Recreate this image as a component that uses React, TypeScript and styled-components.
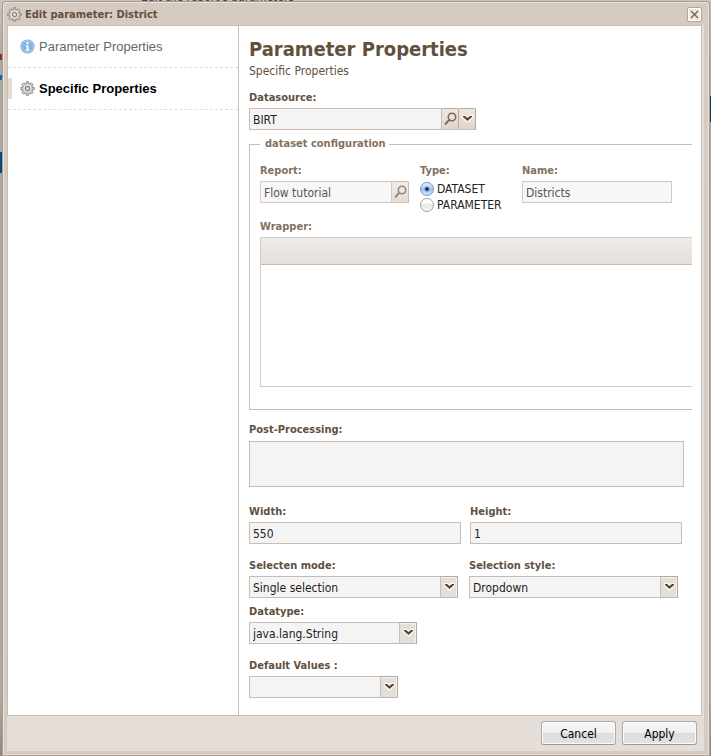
import React, { useId, useState } from "react";
import styled, { createGlobalStyle, css } from "styled-components";

const ui = `"DejaVu Sans Condensed", "Liberation Sans", sans-serif`;
const line = "#cabcb0";
const brown = "#62503f";
const mutedBrown = "#84715f";

const GlobalStyle = createGlobalStyle`
  * { box-sizing: border-box; }
  body { margin: 0; font: 12px/16px ${ui}; color: #222; }
  button, input, select, textarea { font: inherit; color: inherit; margin: 0; border-radius: 0; }
`;

const Page = styled.div`
  position: relative;
  display: flex;
  min-height: 100vh;
  padding: 1px 1px 0 2px;
  overflow: hidden;
  background:
    linear-gradient(#7c3526, #7c3526) 0 54px / 2px 6px no-repeat,
    linear-gradient(#12649c, #12649c) 0 75px / 2px 5px no-repeat,
    linear-gradient(#064a80, #064a80) 0 152px / 2px 21px no-repeat,
    linear-gradient(#063a62, #063a62) 100% 96px / 1px 26px no-repeat,
    linear-gradient(#c4c6c4, #a5a8a8 60px, #a9aaaa 700px, #94857b);
`;

const BackdropText = styled.p`
  position: absolute;
  top: -11px;
  left: 141px;
  margin: 0;
  color: #3c4254;
`;

const Dialog = styled.section`
  position: relative;
  display: flex;
  flex-direction: column;
  flex: 1;
  min-width: 0;
  padding: 0 4px 4px;
  border: 1px solid #ab9b8d;
  border-radius: 3px 3px 0 0;
  box-shadow: inset 0 0 0 1px #ebe1d8;
  background: #d6cbc1;
`;

const TitleBar = styled.header`
  display: flex;
  align-items: center;
  gap: 3px;
  height: 23px;
  padding-top: 1px;
`;

const Title = styled.h1`
  flex: 1;
  margin: 0;
  padding-top: 2px;
  font-size: 11px;
  line-height: 16px;
  color: ${brown};
`;

const CloseButton = styled.button`
  display: flex;
  align-items: center;
  justify-content: center;
  width: 15px;
  height: 15px;
  margin-right: 3px;
  padding: 0;
  border: 1px solid #b6a797;
  border-radius: 2px;
  background: #eee8e2;
  box-shadow: inset 0 0 0 1px #fff;
`;

const Frame = styled.div`
  display: flex;
  flex-direction: column;
  flex: 1;
  margin-right: 1px;
  background: #e5ddd7;
`;

const Body = styled.div`
  display: flex;
  flex: 1;
  margin-right: 2px;
  border: 1px solid ${line};
  background: #fff;
`;

const Sidebar = styled.nav`
  flex: 0 0 231px;
  border-right: 1px solid ${line};
`;

const SideLink = styled.a<{ $active?: boolean }>`
  display: flex;
  align-items: center;
  gap: 4px;
  height: 42px;
  border-bottom: 1px dashed #dedede;
  font: ${p => (p.$active ? "bold" : "normal")} 13px/16px "Liberation Sans", Arial, sans-serif;
  color: ${p => (p.$active ? "#000" : "#666")};
  text-decoration: none;

  &::before {
    content: "";
    width: 4px;
    height: 21px;
    margin-right: 4px;
    background: ${p => (p.$active ? "#e5ddd7" : "transparent")};
  }
`;

const Form = styled.form`
  flex: 1;
  min-width: 0;
  padding: 11px 9px 16px 10px;
`;

const Heading = styled.h2`
  margin: 0;
  font-size: 20px;
  line-height: 24px;
  color: ${brown};
`;

const SubHeading = styled.p`
  margin: 2px 0 10px;
  color: ${brown};
`;

const Field = styled.div<{ $width?: number }>`
  display: flex;
  flex-direction: column;
  gap: 1px;
  min-width: 0;
  max-width: ${p => (p.$width ? `${p.$width}px` : "none")};
`;

const labelText = css`
  font-size: 11px;
  font-weight: bold;
  line-height: 18px;
  color: ${brown};
`;

const Label = styled.label`
  ${labelText}
`;

const fieldBox = css`
  width: 100%;
  min-width: 0;
  padding: 1px 3px 0;
  border: 1px solid ${line};
  background: #f4f4f4;
  outline: none;
`;

const TextInput = styled.input`
  ${fieldBox}
  height: 22px;
`;

const TextArea = styled.textarea`
  ${fieldBox}
  display: block;
  height: 46px;
  resize: none;
`;

const Joined = styled.div`
  display: flex;
  ${TextInput} { flex: 1; }
`;

const SquareButton = styled.button`
  display: flex;
  flex: 0 0 17px;
  align-items: center;
  justify-content: center;
  height: 22px;
  padding: 0;
  border: 1px solid #b9a99b;
  border-left-color: #e6ddd5;
  border-bottom-color: ${line};
  border-top-right-radius: 2px;
  background: linear-gradient(#eee8e2, #ded5cd);
`;

const SelectWrap = styled.div`
  position: relative;
`;

const Select = styled.select`
  ${fieldBox}
  display: block;
  height: 22px;
  padding-right: 20px;
  appearance: none;
`;

const SelectArrow = styled.span`
  position: absolute;
  inset: 0 0 0 auto;
  display: flex;
  align-items: center;
  justify-content: center;
  width: 18px;
  padding-bottom: 1px;
  border: 1px solid #b9a99b;
  border-left-color: ${line};
  border-bottom-color: #bcb6bb;
  border-top-right-radius: 2px;
  background: #e5dfd9;
  box-shadow: inset -1px 1px 0 #f5f1ed;
  pointer-events: none;
`;

const Dataset = styled.fieldset`
  min-width: 0;
  margin: 5px 0 11px;
  padding: 9px 0 22px 10px;
  border: 1px solid ${line};
  border-right: 0;
`;

const Legend = styled.legend`
  ${labelText}
  padding: 0 3px 0 5px;
  color: ${mutedBrown};
`;

const DatasetRow = styled.div`
  display: grid;
  grid-template-columns: 149px 91px 150px;
  column-gap: 11px;
  margin-bottom: 5px;
  ${Label} { color: ${mutedBrown}; }
  ${TextInput} { background: #f7f7f7; border-color: #d6cabf; color: #555; }
  ${SquareButton} { opacity: 0.8; }
`;

const Choices = styled.div`
  min-width: 0;
`;

const GroupLabel = styled.div`
  ${labelText}
  margin-bottom: 1px;
  color: ${mutedBrown};
`;

const RadioLabel = styled.label`
  display: flex;
  align-items: center;
  gap: 3px;
  height: 16px;
`;

const Radio = styled.input`
  flex: none;
  appearance: none;
  width: 14px;
  height: 14px;
  border: 1px solid #a3a3a3;
  border-radius: 50%;
  background: linear-gradient(#fff 30%, #e8e8e8 50%, #fafafa);

  &:checked {
    border-color: #7394bd;
    background:
      radial-gradient(circle, #18304f 0 1px, transparent 3px),
      linear-gradient(#e9f3fd, #9cc5f3 55%, #c8ecff);
  }
`;

const WrapperTable = styled.table`
  width: 100%;
  border-collapse: separate;
  border-spacing: 0;
  border: 1px solid #d6cabf;
  border-right: 0;

  th { height: 27px; padding: 0; border-bottom: 1px solid ${line}; background: linear-gradient(#eeebe8, #e4dfda); }
  td { height: 121px; padding: 0; }
`;

const FieldPair = styled.div<{ $gap: number; $inset: number }>`
  display: grid;
  grid-template-columns: 1fr 1fr;
  column-gap: ${p => p.$gap}px;
  margin-right: ${p => p.$inset}px;
`;

const PostField = styled(Field)`
  margin-right: 8px;
  gap: 2px;
`;

const Spaced = styled.div<{ $top: number }>`
  margin-top: ${p => p.$top}px;
`;

const Footer = styled.footer`
  display: flex;
  justify-content: flex-end;
  gap: 6px;
  height: 35px;
  padding: 5px 7px;
`;

const ActionButton = styled.button`
  width: 75px;
  height: 24px;
  padding: 1px 0 0;
  border: 1px solid #ababab;
  border-bottom-color: #999;
  border-radius: 3px;
  background: linear-gradient(#f6f6f6, #f0f0f0 50%, #dcdcdc 50%, #e3e3e3);
  box-shadow: inset 0 0 0 1px #fafafa;
  color: #000;
`;

const Gear = () => (
  <svg width="15" height="15" viewBox="0 0 16 16" fill="none" aria-hidden="true">
    {[0, 45, 90, 135, 180, 225, 270, 315].map(a => (
      <path key={a} transform={`rotate(${a} 8 8)`} d="M6.4 3.2 6.9.8h2.2l.5 2.4" fill="#e6e6e6" stroke="#7d7d7d" strokeWidth="1" />
    ))}
    <circle cx="8" cy="8" r="5.1" fill="#d4d4d4" stroke="#8a8a8a" strokeWidth="0.8" />
    <circle cx="8" cy="8" r="4.1" stroke="#e9e9e9" strokeWidth="1" />
    <circle cx="8" cy="8" r="2.2" fill="#e2e2e2" stroke="#7d7d7d" strokeWidth="1.2" />
  </svg>
);

const Info = () => (
  <svg width="15" height="15" viewBox="0 0 16 16" aria-hidden="true">
    <circle cx="8" cy="8" r="7.5" fill="#6d9dd3" />
    <circle cx="8" cy="8" r="6.3" fill="#86b5e3" stroke="#b9d6f2" strokeWidth="1" />
    <path d="M7 3.2h2v2H7zM6.2 6.7H9v4.6h1v1.2H6.1v-1.2h1V7.8h-.9z" fill="#fff" />
  </svg>
);

const Magnifier = () => (
  <svg width="14" height="14" viewBox="0 0 14 14" fill="none" aria-hidden="true">
    <path d="M5.2 7.8 1.6 11.8" stroke="#7b6553" strokeWidth="2" strokeLinecap="round" />
    <circle cx="8" cy="5" r="3.7" fill="#e9e1da" stroke="#806a58" strokeWidth="1.6" />
  </svg>
);

const Chevron = () => (
  <svg width="11" height="8" viewBox="0 0 11 8" aria-hidden="true">
    <path d="M0 0h4l1.5 1.5L7 0h4v3L5.5 8 0 3z" fill="#fff" opacity="0.8" />
    <path d="M1 1h2l2.5 2L8 1h2v1L5.5 6 1 2z" fill="#594432" />
  </svg>
);

const Cross = () => (
  <svg width="9" height="9" viewBox="0 0 9 9" aria-hidden="true">
    <path d="M1 1l7 7M8 1 1 8" stroke="#75604c" strokeWidth="1.4" />
  </svg>
);

function SelectField({ label, value, width }: { label: string; value: string; width?: number }) {
  const id = useId();
  return (
    <Field $width={width}>
      <Label htmlFor={id}>{label}</Label>
      <SelectWrap>
        <Select id={id} defaultValue={value}>
          <option value={value}>{value}</option>
        </Select>
        <SelectArrow><Chevron /></SelectArrow>
      </SelectWrap>
    </Field>
  );
}

function InputField({ label, value }: { label: string; value: string }) {
  const id = useId();
  return (
    <Field>
      <Label htmlFor={id}>{label}</Label>
      <TextInput id={id} defaultValue={value} />
    </Field>
  );
}

export default function App() {
  const [kind, setKind] = useState("DATASET");
  return (
    <>
      <GlobalStyle />
      <Page>
        <BackdropText aria-hidden="true">Edit the report's parameters</BackdropText>
        <Dialog role="dialog" aria-labelledby="dialog-title">
          <TitleBar>
            <Gear />
            <Title id="dialog-title">Edit parameter: District</Title>
            <CloseButton type="button" aria-label="Close"><Cross /></CloseButton>
          </TitleBar>
          <Frame>
            <Body>
              <Sidebar>
                <SideLink href="#parameter"><Info />Parameter Properties</SideLink>
                <SideLink href="#specific" $active><Gear />Specific Properties</SideLink>
              </Sidebar>
              <Form onSubmit={e => e.preventDefault()}>
                <Heading>Parameter Properties</Heading>
                <SubHeading>Specific Properties</SubHeading>
                <Field $width={227}>
                  <Label htmlFor="datasource">Datasource:</Label>
                  <Joined>
                    <TextInput id="datasource" defaultValue="BIRT" />
                    <SquareButton type="button" aria-label="Search datasource"><Magnifier /></SquareButton>
                    <SquareButton type="button" aria-label="Open datasource list"><Chevron /></SquareButton>
                  </Joined>
                </Field>
                <Dataset>
                  <Legend>dataset configuration</Legend>
                  <DatasetRow>
                    <Field>
                      <Label htmlFor="report">Report:</Label>
                      <Joined>
                        <TextInput id="report" defaultValue="Flow tutorial" />
                        <SquareButton type="button" aria-label="Search report"><Magnifier /></SquareButton>
                      </Joined>
                    </Field>
                    <Choices role="radiogroup" aria-labelledby="type-label">
                      <GroupLabel id="type-label">Type:</GroupLabel>
                      {["DATASET", "PARAMETER"].map(k => (
                        <RadioLabel key={k}>
                          <Radio type="radio" name="kind" checked={kind === k} onChange={() => setKind(k)} />
                          {k}
                        </RadioLabel>
                      ))}
                    </Choices>
                    <InputField label="Name:" value="Districts" />
                  </DatasetRow>
                  <GroupLabel id="wrapper-label">Wrapper:</GroupLabel>
                  <WrapperTable aria-labelledby="wrapper-label">
                    <thead><tr><th /></tr></thead>
                    <tbody><tr><td /></tr></tbody>
                  </WrapperTable>
                </Dataset>
                <PostField>
                  <Label htmlFor="post">Post-Processing:</Label>
                  <TextArea id="post" />
                </PostField>
                <Spaced $top={16}>
                  <FieldPair $gap={9} $inset={10}>
                    <InputField label="Width:" value="550" />
                    <InputField label="Height:" value="1" />
                  </FieldPair>
                </Spaced>
                <Spaced $top={13}>
                  <FieldPair $gap={11} $inset={14}>
                    <SelectField label="Selecten mode:" value="Single selection" />
                    <SelectField label="Selection style:" value="Dropdown" />
                  </FieldPair>
                </Spaced>
                <Spaced $top={5}>
                  <SelectField label="Datatype:" value="java.lang.String" width={168} />
                </Spaced>
                <Spaced $top={13}>
                  <SelectField label="Default Values :" value="" width={149} />
                </Spaced>
              </Form>
            </Body>
            <Footer>
              <ActionButton type="button">Cancel</ActionButton>
              <ActionButton type="button">Apply</ActionButton>
            </Footer>
          </Frame>
        </Dialog>
      </Page>
    </>
  );
}
